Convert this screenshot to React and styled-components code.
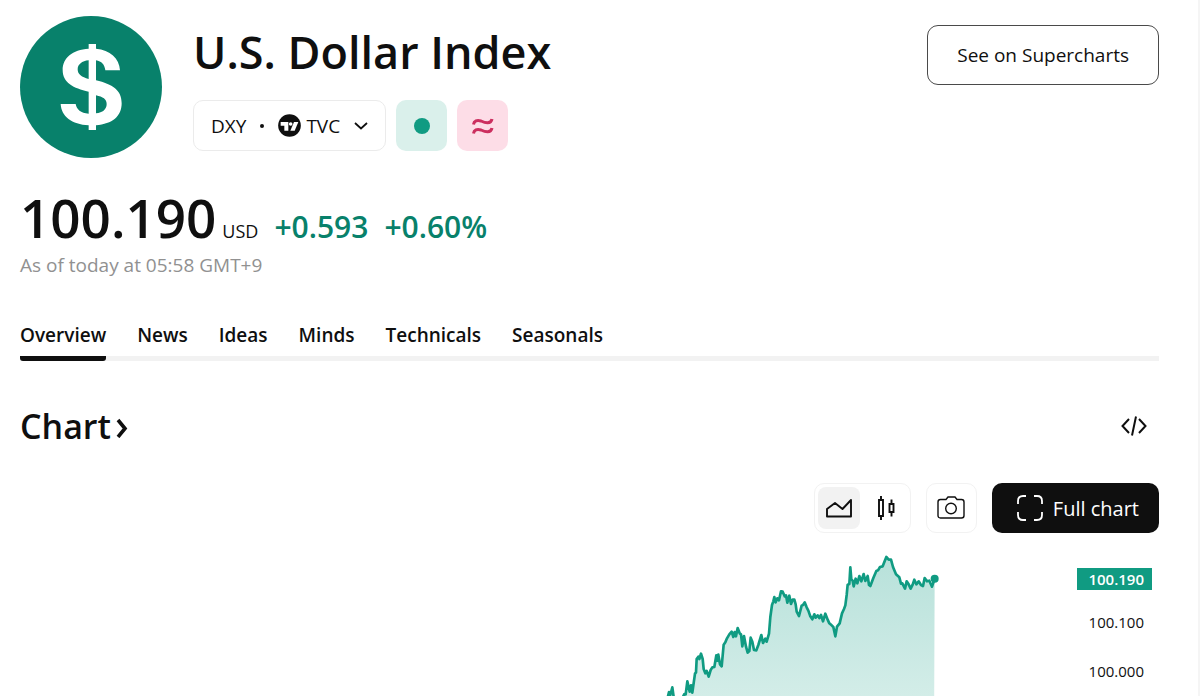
import React from 'react';
import styled, { createGlobalStyle } from 'styled-components';

// --- Data ---

const TABS = ['Overview', 'News', 'Ideas', 'Minds', 'Technicals', 'Seasonals'];

const SERIES = [
  [52, 462], [57, 441], [61, 450], [67, 427], [71, 456], [78, 480], [92, 470], [103, 447],
  [107, 448], [112, 409], [119, 440], [123, 421], [127, 443], [135, 386], [138, 382],
  [140, 342], [145, 335], [148, 342], [153, 326], [158, 342], [161, 372], [166, 385],
  [170, 378], [176, 395], [182, 375], [187, 367], [193, 366], [199, 331], [202, 347],
  [205, 329], [210, 358], [215, 364], [221, 299], [226, 292], [231, 280], [238, 268],
  [245, 260], [250, 276], [254, 261], [258, 274], [263, 249], [269, 265], [273, 268],
  [277, 304], [282, 273], [288, 305], [293, 323], [298, 318], [302, 278], [307, 290],
  [312, 315], [319, 316], [325, 300], [334, 270], [339, 294], [346, 281], [350, 290],
  [357, 266], [361, 216], [366, 180], [370, 169], [373, 156], [377, 172], [382, 160],
  [387, 166], [393, 139], [398, 140], [404, 154], [408, 151], [412, 173], [418, 152],
  [423, 177], [428, 164], [433, 164], [437, 178], [440, 200], [447, 213], [455, 182],
  [459, 180], [464, 172], [470, 187], [475, 197], [481, 214], [487, 223], [493, 208],
  [497, 218], [503, 211], [508, 219], [513, 210], [519, 229], [526, 206], [533, 224],
  [538, 235], [545, 241], [550, 246], [556, 274], [561, 245], [569, 235], [576, 205],
  [582, 192], [586, 181], [590, 150], [593, 119], [598, 117], [601, 67], [604, 103],
  [608, 107], [611, 124], [617, 101], [622, 115], [628, 93], [634, 109], [641, 87],
  [646, 108], [653, 93], [657, 120], [661, 123], [670, 99], [679, 78], [684, 76],
  [690, 66], [698, 64], [709, 36], [716, 44], [723, 44], [729, 66], [738, 88],
  [748, 97], [753, 116], [757, 115], [765, 131], [770, 109], [776, 118], [782, 131],
  [788, 119], [793, 104], [799, 118], [806, 109], [813, 120], [819, 123], [824, 99],
  [831, 109], [838, 107], [846, 125], [854, 101],
];

const linePoints = SERIES.map(point => point.join(',')).join(' ');
const areaPoints = `52,600 ${linePoints} 852,600`;

// --- Icons ---

const DollarLogo = () => (
  <svg width="142" height="142" viewBox="0 0 426 426" aria-hidden="true">
    <circle cx="213" cy="213" r="213" fill="#08816b" />
    <path
      fill="#fff"
      d="M206 84h22v14c42 4 70 28 72 65h-44c-2-17-11-27-28-30v60c50 12 77 29 77 69 0 39-28 62-77 66v14h-22v-14c-51-3-82-27-84-64h45c3 17 15 27 39 29v-66c-46-11-78-26-78-65 0-36 29-61 78-64V84zm0 49c-20 2-33 12-33 27 0 16 12 23 33 29v-56zm22 105v54c20-2 32-12 32-28 0-15-11-21-32-26z"
    />
  </svg>
);

const TvLogo = () => (
  <svg width="23" height="23" viewBox="0 0 69 69" aria-hidden="true">
    <circle cx="34.5" cy="34.5" r="34" fill="#0f0f0f" />
    <path fill="#fff" d="M8 24h23v26H19V35H8z" />
    <circle cx="38" cy="30" r="5.5" fill="#fff" />
    <path fill="#fff" d="M48 24h13L50 50H37z" />
  </svg>
);

const ChevronDown = () => (
  <svg width="14" height="8" viewBox="0 0 14 8" fill="none" stroke="#0f0f0f" strokeWidth="1.8" aria-hidden="true">
    <path d="M1 1l6 5.5 6-5.5" />
  </svg>
);

const WavesIcon = () => (
  <svg width="22" height="16" viewBox="0 0 22 16" fill="none" stroke="#cc2f5f" strokeWidth="3" aria-hidden="true">
    <path d="M1.5 6.5C2 3 5 1.5 9 3c4 1.8 10 3.500 11-2M1.5 15.500C2 12 5 10.500 9 12c4 1.800 10 3.500 11-2" />
  </svg>
);

const ChevronRight = () => (
  <svg width="12" height="24" viewBox="0 0 12 24" fill="none" stroke="#0f0f0f" strokeWidth="3.6" aria-hidden="true">
    <path d="M2 6l7 8.500L2 23" />
  </svg>
);

const CodeIcon = () => (
  <svg width="26" height="20" viewBox="0 0 26 20" fill="none" stroke="#0f0f0f" strokeWidth="2" aria-hidden="true">
    <path d="M8 3l-6.500 7L8 17M18 3l6.500 7L18 17M15 .5l-4 19" />
  </svg>
);

const AreaIcon = () => (
  <svg width="28" height="28" viewBox="0 0 28 28" fill="none" stroke="#0f0f0f" strokeWidth="1.9" strokeLinejoin="round" aria-hidden="true">
    <path d="M2 15l8-6 7.500 6L26 6v16.500H2z" />
  </svg>
);

const CandlesIcon = () => (
  <svg width="28" height="28" viewBox="0 0 28 28" fill="none" stroke="#0f0f0f" strokeWidth="1.9" aria-hidden="true">
    <path d="M7 6h4v16H7zM9 2v4M9 22v4M17.500 10h4v8h-4zM19.500 5.500V10M19.500 18v4.500" />
  </svg>
);

const CameraIcon = () => (
  <svg width="28" height="26" viewBox="0 0 28 26" fill="none" stroke="#0f0f0f" strokeWidth="1.4" aria-hidden="true">
    <path d="M3.500 4.500H9l2-2.500h7l2 2.500h4.500Q27 4.500 27 7v13.500q0 2.500-2.500 2.500h-21Q1 23 1 20.500V7q0-2.500 2.500-2.500z" />
    <circle cx="14" cy="13.500" r="5.300" />
  </svg>
);

const ExpandIcon = () => (
  <svg width="26" height="26" viewBox="0 0 26 26" fill="none" stroke="#fff" strokeWidth="1.8" aria-hidden="true">
    <path d="M9 1H6Q1 1 1 6v3M17 1h3q5 0 5 5v3M9 25H6q-5 0-5-5v-3M17 25h3q5 0 5-5v-3" />
  </svg>
);

const App = () => (
  <>
    <GlobalStyle />
    <Page>
      <Header>
        <DollarLogo />
        <Identity>
          <Title>U.S. Dollar Index</Title>
          <SymbolRow>
            <SymbolButton type="button">
              <span>DXY</span>
              <Dot />
              <Exchange>
                <TvLogo />
                TVC
              </Exchange>
              <ChevronDown />
            </SymbolButton>
            <Badge $tint="#daf0eb" role="img" aria-label="Market open">
              <StatusDot />
            </Badge>
            <Badge $tint="#fddde7" role="img" aria-label="Derived data">
              <WavesIcon />
            </Badge>
          </SymbolRow>
        </Identity>
        <OutlineButton type="button">See on Supercharts</OutlineButton>
      </Header>

      <Quote>
        <Price>100.190</Price>
        <Currency>USD</Currency>
        <Change>+0.593</Change>
        <Change>+0.60%</Change>
      </Quote>
      <Timestamp>As of today at 05:58 GMT+9</Timestamp>

      <Tabs>
        {TABS.map((tab, index) => (
          <Tab key={tab} href={`#${tab.toLowerCase()}`} $active={index === 0}>
            {tab}
          </Tab>
        ))}
      </Tabs>

      <SectionHeader>
        <SectionTitle>
          Chart
          <ChevronRight />
        </SectionTitle>
        <IconButton type="button" aria-label="Embed">
          <CodeIcon />
        </IconButton>
      </SectionHeader>

      <Toolbar>
        <Segment>
          <SegmentButton type="button" aria-label="Area" $active>
            <AreaIcon />
          </SegmentButton>
          <SegmentButton type="button" aria-label="Candles">
            <CandlesIcon />
          </SegmentButton>
        </Segment>
        <SquareButton type="button" aria-label="Snapshot">
          <CameraIcon />
        </SquareButton>
        <FullChartButton type="button">
          <ExpandIcon />
          Full chart
        </FullChartButton>
      </Toolbar>

      <ChartPanel>
        <Plot>
          <svg width="300" height="151" viewBox="0 0 900 453" role="img" aria-label="Price chart">
            <defs>
              <linearGradient id="area" x1="0" y1="0" x2="0" y2="453" gradientUnits="userSpaceOnUse">
                <stop offset="0" stopColor="#b5e0d9" />
                <stop offset="1" stopColor="#d3ede8" />
              </linearGradient>
            </defs>
            <polygon points={areaPoints} fill="url(#area)" />
            <polyline points={linePoints} fill="none" stroke="#109b82" strokeWidth="8" strokeLinejoin="round" />
            <circle cx="854" cy="101" r="12" fill="#109b82" />
          </svg>
        </Plot>
        <Axis>
          <LastPrice>100.190</LastPrice>
          <AxisLabel>100.100</AxisLabel>
          <AxisLabel>100.000</AxisLabel>
        </Axis>
      </ChartPanel>
    </Page>
  </>
);

export default App;

// --- Styled components ---

const GlobalStyle = createGlobalStyle`
  * {
    box-sizing: border-box;
  }
  body {
    margin: 0;
    background: #fff;
    color: #0f0f0f;
    font-family: 'Trebuchet MS', 'Open Sans', sans-serif;
    font-size: 19px;
  }
  button {
    font: inherit;
    color: inherit;
    cursor: pointer;
  }
  svg {
    display: block;
    flex-shrink: 0;
  }
`;

const Page = styled.main`
  display: flex;
  flex-direction: column;
  height: 100vh;
  overflow: hidden;
  padding: 16px 39px 0 20px;
  border-right: 2px solid #f5f5f5;
`;

const Header = styled.header`
  display: flex;
  align-items: flex-start;
  gap: 31px;
`;

const Identity = styled.div`
  flex: 1;
`;

const Title = styled.h1`
  margin: 8px 0 20px;
  font-size: 45px;
  font-weight: 600;
  line-height: 56px;
`;

const SymbolRow = styled.div`
  display: flex;
  gap: 10px;
`;

const SymbolButton = styled.button`
  display: flex;
  align-items: center;
  gap: 14px;
  height: 51px;
  padding: 0 17px;
  border: 1px solid #ebebeb;
  border-radius: 10px;
  background: #fff;
`;

const Dot = styled.span`
  width: 4px;
  height: 4px;
  border-radius: 50%;
  background: #0f0f0f;
`;

const Exchange = styled.span`
  display: flex;
  align-items: center;
  gap: 5px;
`;

const Badge = styled.span`
  display: flex;
  align-items: center;
  justify-content: center;
  width: 51px;
  height: 51px;
  border-radius: 10px;
  background: ${props => props.$tint};
`;

const StatusDot = styled.span`
  width: 16px;
  height: 16px;
  border-radius: 50%;
  background: #109b82;
`;

const OutlineButton = styled.button`
  height: 60px;
  margin-top: 9px;
  padding: 0 29px;
  border: 1px solid #4a4a4a;
  border-radius: 11px;
  background: #fff;
`;

const Quote = styled.div`
  display: flex;
  align-items: baseline;
  margin: 28px 0 2px;
  line-height: 32px;
`;

const Price = styled.span`
  font-size: 53px;
  font-weight: 600;
  line-height: 64px;
`;

const Currency = styled.span`
  margin: 0 16px 0 6px;
  font-size: 18px;
`;

const Change = styled.span`
  margin-right: 16px;
  color: #08816b;
  font-size: 30px;
  font-weight: 600;
`;

const Timestamp = styled.p`
  margin: 0;
  color: #919191;
  line-height: 26px;
`;

const Tabs = styled.nav`
  display: flex;
  gap: 31px;
  margin-top: 44px;
  box-shadow: inset 0 -5px #f2f2f2;
`;

const Tab = styled.a`
  padding-bottom: 8px;
  border-bottom: 5px solid ${props => (props.$active ? '#0f0f0f' : 'transparent')};
  border-radius: 3px;
  color: #0f0f0f;
  font-weight: 600;
  line-height: 26px;
  text-decoration: none;
`;

const SectionHeader = styled.div`
  display: flex;
  align-items: center;
  justify-content: space-between;
  margin-top: 41px;
`;

const SectionTitle = styled.h2`
  display: flex;
  align-items: center;
  gap: 5px;
  margin: 0;
  font-size: 34px;
  font-weight: 600;
  line-height: 48px;
`;

const IconButton = styled.button`
  padding: 12px;
  border: 0;
  background: none;
`;

const Toolbar = styled.div`
  display: flex;
  justify-content: flex-end;
  gap: 15px;
  margin-top: 33px;
`;

const Segment = styled.div`
  display: flex;
  gap: 5px;
  padding: 3px;
  border: 1px solid #f2f2f2;
  border-radius: 10px;
`;

const SegmentButton = styled.button`
  display: flex;
  align-items: center;
  justify-content: center;
  width: 42px;
  height: 42px;
  padding: 0;
  border: 0;
  border-radius: 8px;
  background: ${props => (props.$active ? '#f2f2f2' : 'none')};
`;

const SquareButton = styled.button`
  display: flex;
  align-items: center;
  justify-content: center;
  width: 51px;
  height: 50px;
  padding: 0;
  border: 1px solid #f2f2f2;
  border-radius: 10px;
  background: #fff;
`;

const FullChartButton = styled.button`
  display: flex;
  align-items: center;
  gap: 10px;
  height: 50px;
  padding: 0 20px 0 25px;
  border: 0;
  border-radius: 10px;
  background: #0f0f0f;
  color: #fff;
  font-size: 20px;
`;

const ChartPanel = styled.section`
  display: flex;
  flex: 1;
  min-height: 0;
  margin-top: 12px;
  overflow: hidden;
`;

const Plot = styled.div`
  display: flex;
  flex: 1;
  justify-content: flex-end;
  padding-right: 127px;
`;

const Axis = styled.div`
  display: flex;
  flex-direction: column;
  gap: 27px;
  width: 82px;
  padding-top: 23px;
  font-size: 15px;
  line-height: 22px;
`;

const AxisLabel = styled.span`
  width: 75px;
  padding: 0 8px;
  text-align: right;
`;

const LastPrice = styled(AxisLabel)`
  margin-bottom: -6px;
  background: #109b82;
  color: #fff;
  font-weight: 600;
`;
